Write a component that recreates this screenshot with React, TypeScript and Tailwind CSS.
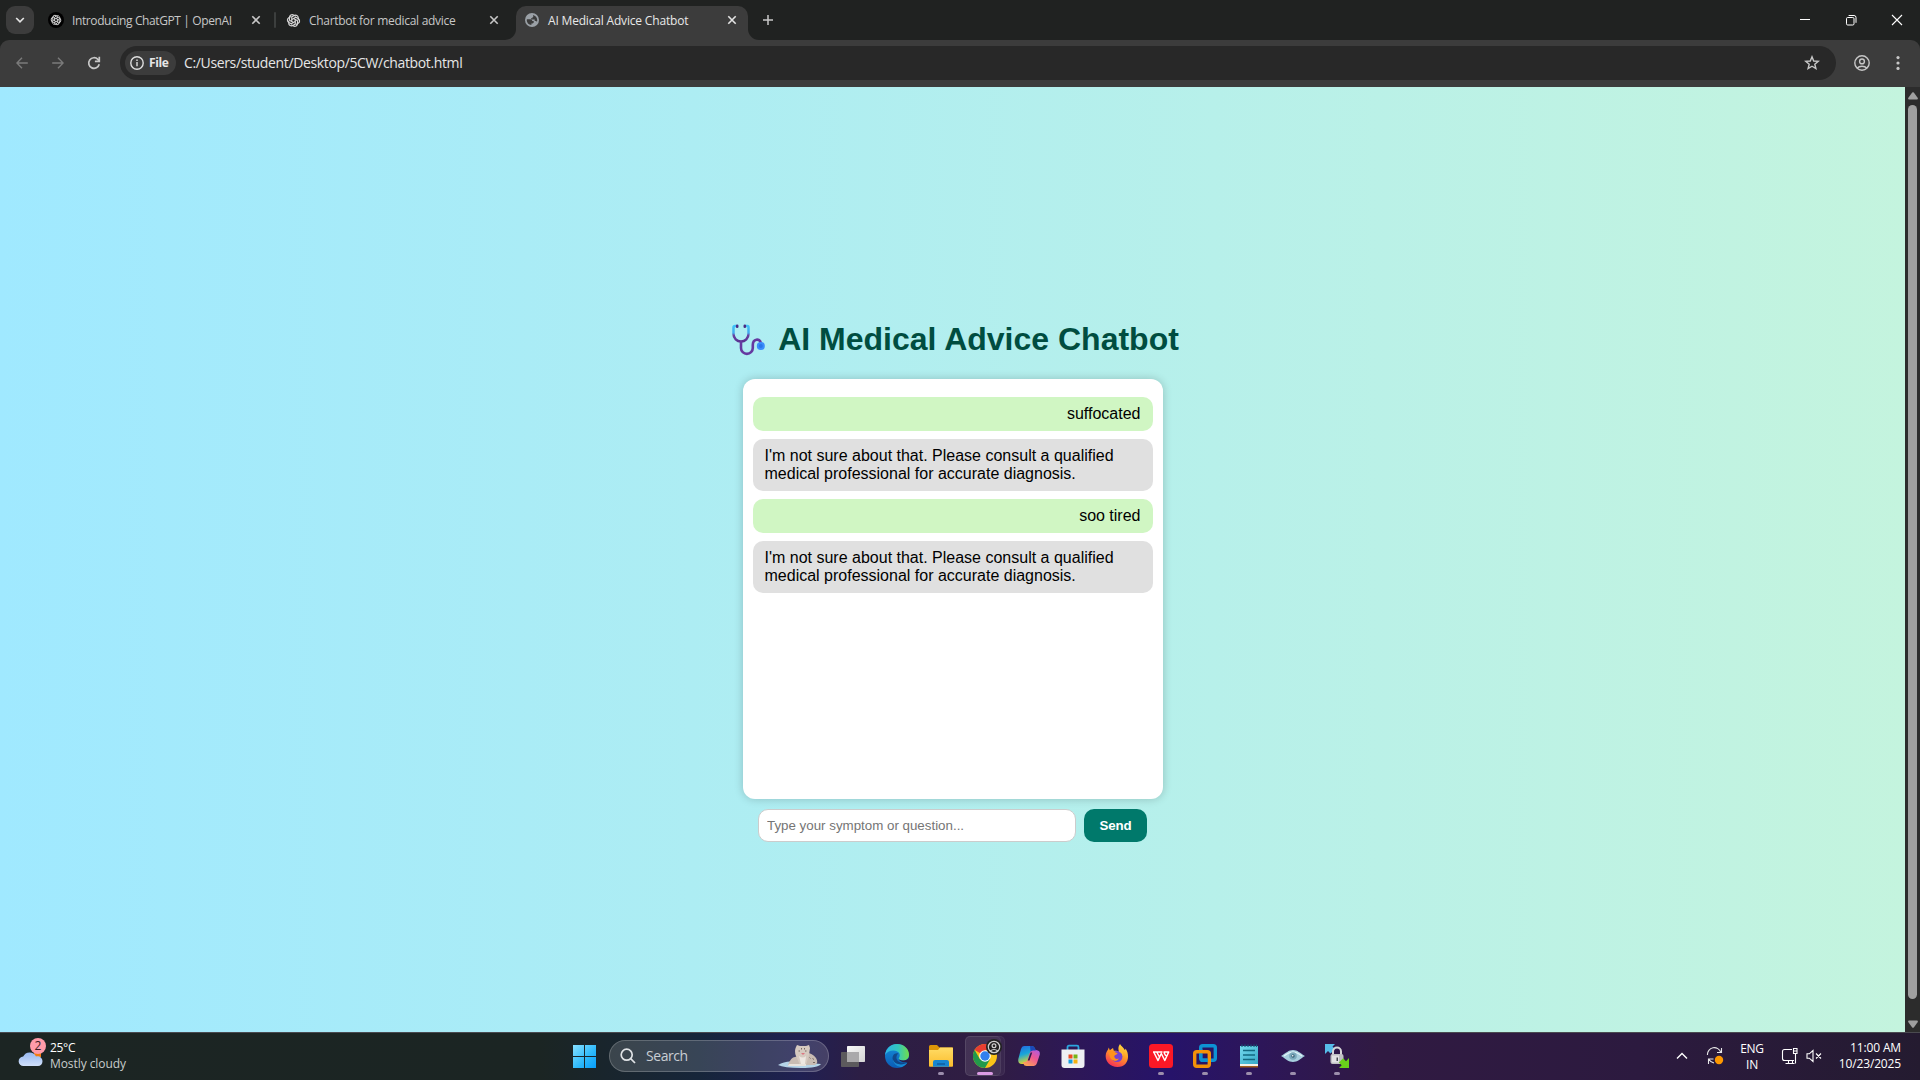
import React from "react";

const UI = "font-['Open_Sans',sans-serif]";

function OpenAIMark({ className = "", stroke = "#d6d6d6" }: { className?: string; stroke?: string }) {
  return (
    <svg viewBox="0 0 24 24" className={className} fill="none" stroke={stroke} strokeWidth="1.9" strokeLinejoin="round">
      {[0, 60, 120, 180, 240, 300].map((a) => (
        <path key={a} transform={`rotate(${a} 12 12)`} d="M9.2 13.6V6.2L13 3.9c3-1.6 6.6.4 6.6 3.8v4" />
      ))}
    </svg>
  );
}

function Globe() {
  return (
    <svg viewBox="0 0 14 14" className="h-[14px] w-[14px] shrink-0">
      <circle cx="7" cy="7" r="7" fill="#9aa0a6" />
      <path d="M2 6.2h3.300c1.200 0 1.900.8 1.900 1.800h1.500v1.300c0 .7-.5 1.200-1.200 1.200H6.400V12C3.600 11.800 1.700 9.600 1.700 7z" fill="#3c3c3c" />
      <path d="M8 1.900c2.400.5 4.200 2.500 4.200 5.100 0 .7-.1 1.200-.3 1.700-.4-.3-.6-.8-1.300-.8H9.700V6.500H6V5.300h1.500V4h.8z" fill="#3c3c3c" />
    </svg>
  );
}

function Close({ color = "#c7c7c7" }: { color?: string }) {
  return (
    <svg viewBox="0 0 10 10" className="h-[10px] w-[10px]" stroke={color} strokeWidth="1.600">
      <path d="M1.300 1.300l7.400 7.400M8.700 1.300L1.300 8.700" />
    </svg>
  );
}

function TabStrip() {
  return (
    <div className="flex h-10 bg-[#3c3c3c]">
      <div className="flex h-10 w-[516px] items-start rounded-br-[11px] bg-[#202221] pt-[6px]">
        <div className="ml-[6px] flex h-7 w-7 shrink-0 items-center justify-center rounded-[9px] bg-[#3c3c3c]">
          <svg viewBox="0 0 10 10" className="h-[10px] w-[10px]" fill="none" stroke="#e3e3e3" strokeWidth="1.700">
            <path d="M1.200 3l3.800 3.800L8.800 3" />
          </svg>
        </div>
        <div className="ml-[14px] mt-[6px] flex h-4 w-4 shrink-0 items-center justify-center rounded-full bg-black">
          <OpenAIMark className="h-[12px] w-[12px]" />
        </div>
        <div className="ml-[8px] mt-[6px] w-[179px] shrink-0 whitespace-nowrap text-[12px] leading-[17px] tracking-[-0.39px] text-[#c7c7c7]">Introducing ChatGPT | OpenAI</div>
        <div className="mt-[9px]"><Close /></div>
        <div className="ml-[13px] mt-[6px] h-4 w-[2px] rounded-full bg-[#3c3f3e]" />
        <div className="ml-[10px] mt-[7px]"><OpenAIMark className="h-[15px] w-[15px]" /></div>
        <div className="ml-[8px] mt-[6px] w-[180px] shrink-0 whitespace-nowrap text-[12px] leading-[17px] tracking-[-0.29px] text-[#c7c7c7]">Chartbot for medical advice</div>
        <div className="mt-[9px]"><Close /></div>
      </div>
      <div className="w-[232px] bg-[#202221] pt-[6px]">
        <div className="flex h-[34px] rounded-t-[10px] bg-[#3c3c3c] pl-[9px] pt-[7px]">
          <Globe />
          <div className="-mt-[1px] ml-[9px] w-[179px] shrink-0 whitespace-nowrap text-[12px] leading-[17px] tracking-[-0.18px] text-[#e8e8e8]">AI Medical Advice Chatbot</div>
          <div className="mt-[2px]"><Close color="#e3e3e3" /></div>
        </div>
      </div>
      <div className="flex h-10 flex-1 rounded-bl-[11px] bg-[#202221]">
        <svg viewBox="0 0 12 12" className="ml-[14px] mt-[14px] h-3 w-3" stroke="#c7c7c7" strokeWidth="1.500">
          <path d="M6 1v10M1 6h10" />
        </svg>
        <div className="ml-auto flex pr-[17px] pt-[14px]">
          <svg viewBox="0 0 12 12" className="mr-[34px] h-3 w-3" stroke="#fff" strokeWidth="1"><path d="M1 5.500h10" /></svg>
          <svg viewBox="0 0 12 12" className="mr-[34px] h-3 w-3" stroke="#fff" strokeWidth="1" fill="none">
            <rect x="1.500" y="3.500" width="7.500" height="7.500" rx="1.200" />
            <path d="M3.600 1.500h5.400a2 2 0 0 1 2 2v5.300" />
          </svg>
          <svg viewBox="0 0 12 12" className="h-3 w-3" stroke="#fff" strokeWidth="1.100"><path d="M1 1l10 10M11 1L1 11" /></svg>
        </div>
      </div>
    </div>
  );
}

function Toolbar() {
  return (
    <div className="bg-[#202221]">
      <div className="flex h-[47px] items-start rounded-t-[9px] bg-[#3c3c3c] pt-[6px]">
        <svg viewBox="0 0 12 12" className="ml-4 mt-[11px] h-3 w-3" fill="none" stroke="#7b7b7b" strokeWidth="1.400"><path d="M11.800 6H1M6 .8L.9 6 6 11.200" /></svg>
        <svg viewBox="0 0 12 12" className="ml-6 mt-[11px] h-3 w-3" fill="none" stroke="#7b7b7b" strokeWidth="1.400"><path d="M.2 6H11M6 .8L11.100 6 6 11.200" /></svg>
        <svg viewBox="0 0 14 14" className="ml-[23px] mt-[10px] h-[14px] w-[14px]" fill="none" stroke="#c7c7c7" strokeWidth="1.700">
          <path d="M12.200 8.200A5.300 5.300 0 1 1 10.900 3.400L12.300 4.900" />
          <path d="M12.300 .8V5.300H7.900" />
        </svg>
        <div className="ml-[19px] flex h-[34px] w-[1716px] items-center rounded-full bg-[#282828] pl-[5px]">
          <div className="flex h-6 w-[51px] items-center rounded-full bg-[#3c3c3c] pl-[5px]">
            <svg viewBox="0 0 14 14" className="h-[14px] w-[14px]" fill="none" stroke="#dedede" strokeWidth="1.400">
              <circle cx="7" cy="7" r="6.200" /><path d="M7 6v4.300M7 3.500v1.500" />
            </svg>
            <span className="ml-[5px] text-[12px] font-bold leading-4 tracking-[-0.4px] text-[#e6e6e6]">File</span>
          </div>
          <span className="ml-[8px] whitespace-nowrap text-[14px] leading-5 tracking-[-0.36px] text-[#e6e6e6]">C:/Users/student/Desktop/5CW/chatbot.html</span>
          <svg viewBox="0 0 16 16" className="ml-auto mr-[16px] h-4 w-4" fill="none" stroke="#c7c7c7" strokeWidth="1.400">
            <path d="M8 1.800l1.700 4.200 4.600.3-3.500 2.900 1.100 4.400L8 11.200l-3.900 2.400 1.100-4.400L1.700 6.300 6.300 6z" />
          </svg>
        </div>
        <svg viewBox="0 0 16 16" className="ml-[18px] mt-[9px] h-4 w-4" fill="none" stroke="#c7c7c7" strokeWidth="1.400">
          <circle cx="8" cy="8" r="7.200" /><circle cx="8" cy="6.400" r="2.400" /><path d="M3 13.200c2.600-2.700 7.400-2.700 10 0" />
        </svg>
        <svg viewBox="0 0 4 14" className="ml-[26px] mt-[10px] h-[14px] w-1" fill="#c7c7c7">
          <circle cx="2" cy="1.600" r="1.600" /><circle cx="2" cy="7" r="1.600" /><circle cx="2" cy="12.400" r="1.600" />
        </svg>
      </div>
    </div>
  );
}

function Stethoscope() {
  return (
    <svg viewBox="0 0 34 32" className="h-8 w-[34px]" fill="none" strokeLinecap="round">
      <defs>
        <linearGradient id="tube" x1="0" y1="0" x2="0" y2="1">
          <stop offset="0" stopColor="#3fc2f8" /><stop offset=".45" stopColor="#43a9ee" /><stop offset=".6" stopColor="#6640a0" /><stop offset="1" stopColor="#5b3392" />
        </linearGradient>
      </defs>
      <path d="M4.500 2H3Q1.500 2 1.500 3.500V10a7.500 7.500 0 0 0 15 0V3.500Q16.500 2 15.500 2H14" stroke="url(#tube)" strokeWidth="2.500" />
      <path d="M9 18v6a5.900 5.900 0 0 0 11.800 0v-3c0-6.500 7-7 8-2.200" stroke="#6539a0" strokeWidth="2.600" />
      <path d="M5.200 1.800v1M12.800 1.800v1" stroke="#4a2a83" strokeWidth="2.600" />
      <circle cx="28.800" cy="22" r="4" fill="#3a8dfb" /><circle cx="28.800" cy="22" r="2" fill="#2877ea" />
    </svg>
  );
}

const REPLY = "I'm not sure about that. Please consult a qualified medical professional for accurate diagnosis.";
const messages = [
  { user: true, text: "suffocated" },
  { user: false, text: REPLY },
  { user: true, text: "soo tired" },
  { user: false, text: REPLY },
];

function ChatPage() {
  return (
    <div className="flex h-[945px]">
      <main className="flex flex-1 flex-col items-center bg-[linear-gradient(to_right,#a0e9ff,#c4f4de)] pt-[234px] font-['Liberation_Sans',sans-serif]">
        <h1 className="ml-[6px] flex h-[37px] items-center whitespace-nowrap text-[32px] font-bold leading-[37px] text-[#004d40]">
          <Stethoscope />
          <span className="ml-[12px]">AI Medical Advice Chatbot</span>
        </h1>
        <section className="mt-[21px] flex h-[420px] w-[420px] flex-col gap-2 rounded-[12px] bg-white px-[10px] pt-[18px] text-[16px] leading-[18px] text-black shadow-[0_0_10px_rgba(0,0,0,0.2)]">
          {messages.map((m, i) => (
            <div key={i} className={m.user ? "rounded-[10px] bg-[#d0f6c3] px-3 py-2 text-right" : "rounded-[10px] bg-[#e0e0e0] px-3 py-2"}>{m.text}</div>
          ))}
        </section>
        <form className="mt-[10px] flex h-[33px] gap-2" onSubmit={(e) => e.preventDefault()}>
          <input className="h-[33px] w-[318px] rounded-[10px] border border-[#ccc] bg-white px-2 text-[13.333px] placeholder:text-[#757575]" placeholder="Type your symptom or question..." />
          <button className="h-[33px] w-[63px] rounded-[10px] bg-[#00796b] text-[13.333px] font-bold tracking-[-0.2px] text-white">Send</button>
        </form>
      </main>
      <div className="flex w-[15px] flex-col items-center bg-[#2c2c2c] pt-[5px]">
        <svg viewBox="0 0 10 8" className="h-2 w-[10px]" fill="#9f9f9f"><path d="M4.200.6q.8-.8 1.600 0L9.800 6q.3 1.300-.8 1.500H1Q-.1 7.300.2 6z" /></svg>
        <div className="mt-[5px] h-[894px] w-[9px] rounded-full bg-[#9f9f9f]" />
        <svg viewBox="0 0 10 8" className="mt-[21px] h-2 w-[10px]" fill="#9f9f9f"><path d="M4.200 7.400q.8.8 1.600 0L9.800 2Q10.100.7 9 .5H1Q-.1.700.2 2z" /></svg>
      </div>
    </div>
  );
}

function EdgeIcon() {
  return (
    <svg viewBox="0 0 24 24" className="h-6 w-6">
      <defs>
        <linearGradient id="eg" x1="0" y1=".4" x2="1" y2=".4"><stop stopColor="#2db4e8" /><stop offset=".55" stopColor="#33c7bd" /><stop offset="1" stopColor="#72dc49" /></linearGradient>
        <linearGradient id="eb" x1="0" y1="0" x2="0" y2="1"><stop stopColor="#168fdb" /><stop offset="1" stopColor="#0b5cb5" /></linearGradient>
      </defs>
      <circle cx="12" cy="12" r="12" fill="url(#eb)" />
      <path d="M.1 11C.7 4.600 5.800 0 12 0c7 0 12 5 12 10.500 0 4-2.800 6-6 6-3.300 0-5-1.200-4-2.700 2.300-3.500-.5-7.300-5.500-7.300C4.500 6.500 1.500 8.500.1 11z" fill="url(#eg)" />
      <path d="M13.400 9.500C9 8.500 7.300 12 7.600 15c.4 4.200 4.400 8.700 9.400 7.900 2.600-1 4.500-2.500 5.500-4.400.3-.6-.2-.8-.7-.5-4.300 2-9.300.2-10.200-3.300-.5-2.200.3-4 1.800-5.200z" fill="#123f7c" opacity=".8" />
      <path d="M7.600 15c.4 4.200 4.400 8.700 9.400 7.900 2.600-1 4.500-2.500 5.500-4.400C19 21 10 22 7.600 15z" fill="#1688d3" />
      <path d="M21.900 18.200c1.200.8 1.500 1.600 2.100-4.700-1.400 3-6.600 3.900-9.900 1.900-.7-.6.9 3.900 7.800 2.800z" fill="#2a1c48" />
    </svg>
  );
}

function TaskViewIcon() {
  return (
    <svg viewBox="0 0 24 24" className="h-6 w-6">
      <defs><linearGradient id="tv" x1="0" y1="0" x2="1" y2="1"><stop stopColor="#f8f8f8" /><stop offset="1" stopColor="#d4d4d4" /></linearGradient></defs>
      <rect x="6" y="2" width="18" height="16" rx=".7" fill="url(#tv)" />
      <rect x="0" y="8" width="18" height="15" rx=".7" fill="#5c5a5d" />
      <path d="M6 8h12v10H6z" fill="#aaa9ab" />
    </svg>
  );
}

function FolderIcon() {
  return (
    <svg viewBox="0 0 24 24" className="h-6 w-6">
      <defs><linearGradient id="fd" x1="0" y1="0" x2="0" y2="1"><stop stopColor="#ffdc66" /><stop offset="1" stopColor="#fbbd2d" /></linearGradient></defs>
      <path d="M0 2.500Q0 1 1.500 1H8l2.500 2.500H24V12H0z" fill="#dc9508" />
      <path d="M0 6h9l2-2.500h12q1 0 1 1V22q0 .8-.8.8H.8Q0 22.800 0 22z" fill="url(#fd)" />
      <path d="M4 22.800V18q0-2 2-2h12q2 0 2 2v4.800z" fill="#1786d1" />
      <path d="M8 19.500h8v1H8z" fill="#0c4b85" />
    </svg>
  );
}

function ChromeIcon() {
  return (
    <svg viewBox="0 0 24 24" className="h-6 w-6">
      <circle cx="12" cy="12" r="12" fill="#fbc418" />
      <path d="M12 12L1.600 6A12 12 0 0 1 22.400 6H12z" fill="#e83e31" />
      <path d="M1.600 6A12 12 0 0 0 12 24l5.200-9L12 12 6.800 15z" fill="#22994b" />
      <circle cx="12" cy="12" r="5.800" fill="#fff" /><circle cx="12" cy="12" r="4.700" fill="#3280ee" />
    </svg>
  );
}

function CopilotIcon() {
  return (
    <svg viewBox="0 0 24 24" className="h-6 w-6">
      <defs>
        <linearGradient id="ca" x1="0" y1="0" x2=".3" y2="1"><stop stopColor="#2467e0" /><stop offset=".5" stopColor="#19a6da" /><stop offset="1" stopColor="#e5d629" /></linearGradient>
        <linearGradient id="cb" x1="1" y1="0" x2=".3" y2="1"><stop stopColor="#a95be8" /><stop offset=".5" stopColor="#ee5794" /><stop offset="1" stopColor="#fba257" /></linearGradient>
      </defs>
      <path d="M7 2h8q2.200 0 3 2.500l.8 2.500H16q-2 0-2.600 2L11 17q-.8 3-3.500 3H5Q.5 20 1.300 15L4 5q.8-3 3-3z" fill="url(#ca)" />
      <path d="M17 22H9.500q-2.500 0-3.200-2.500L5.800 18H8q2 0 2.700-2.500l2.600-8q.7-1.500 2.700-1.500h3q4.500.4 3.800 4.500L20 19q-.8 3-3 3z" fill="url(#cb)" />
      <path d="M13 2h2q2.200 0 3 2.500l.8 2H16q-1.800 0-2.400 1.500z" fill="#1c48b9" />
      <path d="M13.600 8.500h1.600l-2.700 8H10.700z" fill="#2c1b4d" />
    </svg>
  );
}

function StoreIcon() {
  return (
    <svg viewBox="0 0 24 24" className="h-6 w-6">
      <path d="M6.500 6V3.200q0-1.500 1.500-1.500h8q1.500 0 1.500 1.500V6" fill="none" stroke="#2ba6df" strokeWidth="1.800" />
      <path d="M.5 5.500h23V21q0 3-3 3h-17q-3 0-3-3z" fill="#eef0f2" />
      <path d="M7.500 10.500h4v4h-4z" fill="#eb4d1f" /><path d="M12.500 10.500h4v4h-4z" fill="#78b415" />
      <path d="M7.500 15.500h4v4h-4z" fill="#149fdf" /><path d="M12.500 15.500h4v4h-4z" fill="#f5b211" />
    </svg>
  );
}

function FirefoxIcon() {
  return (
    <svg viewBox="0 0 24 24" className="h-6 w-6">
      <defs><linearGradient id="ff" x1=".8" y1="0" x2=".3" y2="1"><stop stopColor="#ffe243" /><stop offset=".45" stopColor="#ff9b26" /><stop offset="1" stopColor="#f52b59" /></linearGradient></defs>
      <path d="M15 0c1 2 3.500 3.300 4.800 6 .7-.3.700-1 .8-1.500 5 7.500 2.300 18.500-8.200 18.500C5 23 .2 17.500.7 11.500.9 8.500 2 7 3 5.500l.8-2 1 2.800L8 4l.8 2.700C11 6.500 13 6.700 14 8c-1-3-.8-5.500 1-8z" fill="url(#ff)" />
      <circle cx="12" cy="12.500" r="5.500" fill="#7542d2" />
      <path d="M4 6.800c2-.6 4.500.2 6.500 1.700 1.500.2 2 .7 2 1.300-.6 1-2.500 1-3.200 2.200-.2 2 1.700 3.800 4.500 2.500-.7 2-3.800 3.300-6.300 1.600C4.500 14 4 10 4 6.800z" fill="#ff921c" />
      <path d="M14 8c2.500.5 4 2.300 3.800 4.800 0 0 1.700-4.300-2.200-7.200z" fill="#ffbf2f" />
    </svg>
  );
}

function WpsIcon() {
  return (
    <svg viewBox="0 0 24 24" className="h-6 w-6">
      <rect width="24" height="24" rx="3.500" fill="#fb1826" />
      <path d="M4 8h9.500M14.500 8h5.200L15.800 16.500 12.300 9.500 9 16.500 4.700 8M8 8.500l2.500 4.500M15 8.500l1.800 3.500" fill="none" stroke="#fff" strokeWidth="1.500" strokeLinejoin="round" />
    </svg>
  );
}

function VmwareIcon() {
  return (
    <svg viewBox="0 0 24 24" className="h-6 w-6" fill="none" strokeWidth="3.400">
      <rect x="7.700" y="1.700" width="14.600" height="14.600" rx="2" stroke="#0d92d4" />
      <rect x="1.700" y="7.700" width="14.600" height="14.600" rx="2" stroke="#f39108" />
      <path d="M7.700 5v1M7.700 9.400v5M7.700 16.300H14.600" stroke="#0d92d4" />
    </svg>
  );
}

function NotepadIcon() {
  return (
    <svg viewBox="0 0 24 24" className="h-6 w-6">
      <defs><linearGradient id="np" x1="0" y1="0" x2="1" y2="1"><stop stopColor="#74d9ee" /><stop offset="1" stopColor="#36a8c7" /></linearGradient></defs>
      <path d="M3 20h18v3.500H3z" fill="#a35e1c" /><path d="M3 19h18v3H3z" fill="#f5f1e9" />
      <path d="M3 2h18v18H3z" fill="url(#np)" />
      <path d="M6 6.500h12M6 11h12M6 15.500h12" stroke="#126880" strokeWidth="1.600" />
      <path d="M5 .5v2.500M8 .5v2.500M11 .5v2.500M14 .5v2.500M17 .5v2.500M19.500.5v2.500" stroke="#155b78" strokeWidth="1.200" />
    </svg>
  );
}

function EyeIcon() {
  return (
    <svg viewBox="0 0 24 24" className="h-6 w-6">
      <path d="M0 12C5 9 7.500 6 12 6s7 3 12 6c-5 3-7.500 6-12 6S5 15 0 12z" fill="#a7cede" />
      <path d="M3 12c4-3 6-4 9-4s5 1 9 4" fill="none" stroke="#e4f5f9" strokeWidth="1.200" />
      <circle cx="12" cy="12" r="3.800" fill="#7ba9bc" /><circle cx="12" cy="12" r="1.700" fill="#3a6479" /><circle cx="11.700" cy="11.700" r=".8" fill="#fff" />
    </svg>
  );
}

function LockIcon() {
  return (
    <svg viewBox="0 0 24 24" className="h-6 w-6">
      <path d="M0 0h10L7.500 2.500 10 5 5.500 9.500 3 7 0 10z" fill="#56bdea" />
      <path d="M8 11V7.500a4 4 0 0 1 8 0V11" fill="none" stroke="#d6d6d8" strokeWidth="2" />
      <rect x="5.500" y="10" width="13" height="10" rx="2" fill="#bfc0c4" /><path d="M7 11.500h7v7H7z" fill="#e2e2e5" />
      <path d="M11.500 13.500h1.500V17h-1.500z" fill="#454850" />
      <path d="M24 24H14l2.700-2.700-2.800-2.800 4.200-4.200 2.900 2.900L24 14z" fill="#69d21b" />
    </svg>
  );
}

function WeatherIcon() {
  return (
    <svg viewBox="0 0 28 30" className="h-[30px] w-7">
      <defs><linearGradient id="cl" x1="0" y1="0" x2="0" y2="1"><stop stopColor="#96b8f1" /><stop offset="1" stopColor="#d1e0fa" /></linearGradient></defs>
      <path d="M16 13h7v6h-7z" fill="#f27b10" />
      <path d="M5.500 28a4.700 4.700 0 0 1-.3-9.400A7 7 0 0 1 18 18.500c3.500-.8 6.500 1.500 6.500 4.800 0 3-2 4.700-4.500 4.700z" fill="url(#cl)" />
      <circle cx="20" cy="8" r="8" fill="#ff9ba9" />
      <text x="20" y="12.200" textAnchor="middle" fontSize="12" fill="#3b1b22" fontFamily="Open Sans">2</text>
    </svg>
  );
}

function SnowLeopard() {
  return (
    <svg viewBox="0 0 44 26" className="h-[26px] w-11">
      <path d="M0 22q8-5 18-3l25 2q-3 4-20 4T0 22z" fill="#b5d4e8" />
      <path d="M17 14Q13 14 10 22h27q4-2 1-7-4-5-9-5z" fill="#c9bcb3" />
      <path d="M18 4l1-2 3 1h6l3-1 1 3-1 7-3 10h-6l-4-9q-2-5 0-9z" fill="#d6cac0" />
      <path d="M20.500 8h1.500m5 0h1.500m-5-3v1.500m3-1.500v1.500m5 8l1 1m2 0l1.500 1m-1 3h2" stroke="#786b64" strokeWidth="1" />
      <path d="M23 10h4l-2 2z" fill="#dd7781" /><path d="M21 13q4 3 7 0l-1 8h-4z" fill="#eee8e2" />
      <path d="M11 21h17v2H10z" fill="#e9e3dc" />
    </svg>
  );
}

const apps = [
  { name: "taskview", icon: <TaskViewIcon />, running: false },
  { name: "edge", icon: <EdgeIcon />, running: false },
  { name: "explorer", icon: <FolderIcon />, running: true },
  { name: "chrome", icon: <ChromeIcon />, running: true },
  { name: "copilot", icon: <CopilotIcon />, running: false },
  { name: "store", icon: <StoreIcon />, running: false },
  { name: "firefox", icon: <FirefoxIcon />, running: false },
  { name: "wps", icon: <WpsIcon />, running: true },
  { name: "vmware", icon: <VmwareIcon />, running: true },
  { name: "notepad", icon: <NotepadIcon />, running: true },
  { name: "viewer", icon: <EyeIcon />, running: true },
  { name: "transfer", icon: <LockIcon />, running: true },
];

function AppButton({ name, icon, running }: { name: string; icon: React.ReactNode; running: boolean }) {
  const active = name === "chrome";
  return (
    <div className="flex h-full w-11 justify-center">
      <div className={active ? "relative mt-[3px] flex h-10 w-10 flex-col items-center rounded-[5px] border border-white/5 bg-white/5 pt-[7px]" : "flex h-12 w-10 flex-col items-center pt-[11px]"}>
        {active && <div className="absolute -left-px -top-px h-10 w-[36px] rounded-[5px] border border-white/5 bg-white/5" />}
        <div className="relative h-6 w-6 shrink-0">{icon}</div>
        {active && (
          <svg viewBox="0 0 16 16" className="absolute right-[2px] top-[2px] h-4 w-4" fill="none" stroke="#d0d0d0" strokeWidth="1.200">
            <circle cx="8" cy="8" r="8" fill="#222" stroke="none" /><circle cx="8" cy="8" r="5.700" /><circle cx="8" cy="6.800" r="1.900" /><path d="M4.200 12q3.800-3 7.600 0" />
          </svg>
        )}
        {running && <div className={active ? "relative mt-[4px] h-[3px] w-4 shrink-0 rounded-full bg-[#dc9be4]" : "mt-[4px] h-[3px] w-[6px] rounded-full bg-[#9c8eac]"} />}
      </div>
    </div>
  );
}

function Taskbar() {
  return (
    <div className="flex h-12 border-t border-[#4a4a50] bg-[linear-gradient(90deg,#1c2523_0px,#1b2523_540px,#16253a_700px,#202052_800px,#2c1e45_860px,#301d42_990px,#2d1758_1080px,#26136a_1170px,#2d1659_1260px,#301a42_1380px,#2c1a3f_1640px,#241b30_1920px)] text-white">
      <div className="flex w-[562px] pl-[18px]">
        <div className="mt-[5px]"><WeatherIcon /></div>
        <div className="ml-1 pt-[7px] text-[12px] leading-4">
          <div className="tracking-[-0.3px]">25°C</div>
          <div className="whitespace-nowrap tracking-[-0.07px] text-[#c8cccb]">Mostly cloudy</div>
        </div>
      </div>
      <svg viewBox="0 0 23 23" className="ml-[11px] mt-[12px] h-[23px] w-[23px]">
        <defs><linearGradient id="win" x1="0" y1="0" x2="1" y2="1"><stop stopColor="#86e0ff" /><stop offset=".6" stopColor="#2ab7fa" /><stop offset="1" stopColor="#079dfb" /></linearGradient></defs>
        <path d="M0 0h11v11H0zM12 0h11v11H12zM0 12h11v11H0zM12 12h11v11H12z" fill="url(#win)" />
      </svg>
      <div className="ml-[13px] mt-[7px] flex h-8 w-[220px] items-center rounded-full border border-white/20 bg-white/15 pl-[10px]">
        <svg viewBox="0 0 16 16" className="h-4 w-4" fill="none" stroke="#e0e3e6" strokeWidth="1.700"><circle cx="6.700" cy="6.700" r="5.500" /><path d="M10.700 10.700L15 15" /></svg>
        <span className="ml-[10px] text-[14px] leading-5 tracking-[-0.45px] text-[#c9ced4]">Search</span>
        <div className="ml-auto mr-[6px]"><SnowLeopard /></div>
      </div>
      <div className="ml-[2px] flex h-full">{apps.map((a) => <AppButton key={a.name} {...a} />)}</div>
      <div className="ml-auto flex">
        <svg viewBox="0 0 12 12" className="mr-[18px] mt-[17px] h-3 w-3" fill="none" stroke="#fff" strokeWidth="1.400"><path d="M1 8.500l5-5 5 5" /></svg>
        <svg viewBox="0 0 18 18" className="mr-[15px] mt-[14px] h-[18px] w-[18px]" fill="none" stroke="#e8e8e8" strokeWidth="1.100">
          <path d="M1.500 8A6.800 6.800 0 0 1 14.800 5.500M15.500 1v4.500H11M2.500 17v-5H7.500M3 12.500A7 7 0 0 0 8 16" /><circle cx="13" cy="13" r="4.200" fill="#ff9800" stroke="none" />
        </svg>
        <div className="w-[26px] pt-[8px] text-center text-[12px] leading-4 tracking-[-0.3px]">ENG<br />IN</div>
        <svg viewBox="0 0 18 18" className="ml-[16px] mt-[14px] h-[18px] w-[18px]" fill="none" stroke="#fff" strokeWidth="1.100">
          <path d="M11 2.500H3.500Q1.500 2.500 1.500 4.500v7q0 2 2 2H13M4.500 16.500h9M7.500 13.500v3M11.500 13.500v3M12.500 1.500h3.500v5h-3.500zM12.500 4h3.500M14.500 6.500v10" />
        </svg>
        <svg viewBox="0 0 16 16" className="ml-[7px] mt-[15px] h-4 w-4" fill="none" stroke="#fff" strokeWidth="1.100"><path d="M1 5.800h2.300L7 2.500v11L3.300 10.200H1zM10 5.500l5 5M15 5.500l-5 5" /></svg>
        <div className="w-[80px] pr-[1px] pt-[7px] text-right text-[12px] leading-4 tracking-[-0.15px]">11:00 AM<br />10/23/2025</div>
        <div className="w-[18px]" />
      </div>
    </div>
  );
}

export default function App() {
  return (
    <div className={`${UI} h-[1080px] w-[1920px] overflow-hidden`}>
      <TabStrip />
      <Toolbar />
      <ChatPage />
      <Taskbar />
    </div>
  );
}
